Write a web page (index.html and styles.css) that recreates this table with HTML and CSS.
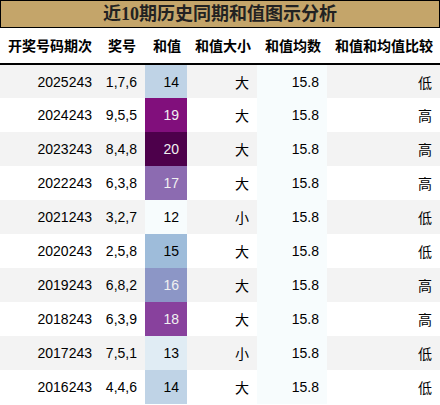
FILE: index.html
```html
<!DOCTYPE html>
<html lang="zh-CN">
<head>
    <meta charset="UTF-8">
    <title>近10期历史同期和值图示分析</title>
    <link rel="stylesheet" href="styles.css">
</head>
<body>
    <table class="sum-table">
        <caption class="sum-title">近10期历史同期和值图示分析</caption>
        <colgroup>
            <col class="c-issue">
            <col class="c-nums">
            <col class="c-sum">
            <col class="c-size">
            <col class="c-avg">
            <col class="c-cmp">
        </colgroup>
        <thead>
            <tr>
                <th>开奖号码期次</th>
                <th>奖号</th>
                <th>和值</th>
                <th>和值大小</th>
                <th>和值均数</th>
                <th>和值和均值比较</th>
            </tr>
        </thead>
        <tbody>
            <tr><td>2025243</td><td>1,7,6</td><td class="s14">14</td><td>大</td><td class="avg">15.8</td><td>低</td></tr>
            <tr><td>2024243</td><td>9,5,5</td><td class="s19">19</td><td>大</td><td class="avg">15.8</td><td>高</td></tr>
            <tr><td>2023243</td><td>8,4,8</td><td class="s20">20</td><td>大</td><td class="avg">15.8</td><td>高</td></tr>
            <tr><td>2022243</td><td>6,3,8</td><td class="s17">17</td><td>大</td><td class="avg">15.8</td><td>高</td></tr>
            <tr><td>2021243</td><td>3,2,7</td><td class="s12">12</td><td>小</td><td class="avg">15.8</td><td>低</td></tr>
            <tr><td>2020243</td><td>2,5,8</td><td class="s15">15</td><td>大</td><td class="avg">15.8</td><td>低</td></tr>
            <tr><td>2019243</td><td>6,8,2</td><td class="s16">16</td><td>大</td><td class="avg">15.8</td><td>高</td></tr>
            <tr><td>2018243</td><td>6,3,9</td><td class="s18">18</td><td>大</td><td class="avg">15.8</td><td>高</td></tr>
            <tr><td>2017243</td><td>7,5,1</td><td class="s13">13</td><td>小</td><td class="avg">15.8</td><td>低</td></tr>
            <tr><td>2016243</td><td>4,4,6</td><td class="s14">14</td><td>大</td><td class="avg">15.8</td><td>低</td></tr>
        </tbody>
    </table>
</body>
</html>
```

FILE: styles.css
```css
* {
    margin: 0;
    padding: 0;
    box-sizing: border-box;
}

body {
    font-family: 'Liberation Sans', 'Noto Sans CJK SC', sans-serif;
    background: #ffffff;
    color: #000000;
    width: 440px;
}

.sum-table {
    width: 440px;
    border-collapse: collapse;
    table-layout: fixed;
    font-size: 14px;
}

.sum-title {
    height: 28px;
    line-height: 26px;
    background: #c4a56a;
    border: 1px solid #000000;
    font-family: 'Liberation Serif', 'Noto Sans CJK SC', serif;
    font-size: 18px;
    font-weight: bold;
    color: #222222;
    text-align: center;
}

.c-issue { width: 100px; }
.c-nums { width: 45px; }
.c-sum { width: 42px; }
.c-size { width: 70px; }
.c-avg { width: 70px; }
.c-cmp { width: 113px; }

.sum-table th {
    height: 36px;
    padding: 0 7px 2px 8px;
    font-family: 'Noto Sans CJK SC', sans-serif;
    font-weight: bold;
    text-align: left;
    white-space: nowrap;
    border-bottom: 2px solid #000000;
}

.sum-table td {
    height: 34px;
    padding: 0 8px 0 0;
    text-align: right;
    white-space: nowrap;
}

.sum-table tbody tr:nth-child(odd) {
    background: #f3f3f3;
}

.avg { background: #f7fcfd; }

/* 和值色阶 12 ~ 20 */
.s12 { background: #f7fcfd; }
.s13 { background: #e0ecf4; }
.s14 { background: #bfd3e6; }
.s15 { background: #9ebcda; }
.s16 { background: #8c96c6; color: #f1f1f1; }
.s17 { background: #8c6bb1; color: #f1f1f1; }
.s18 { background: #88419d; color: #f1f1f1; }
.s19 { background: #810f7c; color: #f1f1f1; }
.s20 { background: #4d004b; color: #f1f1f1; }
```
